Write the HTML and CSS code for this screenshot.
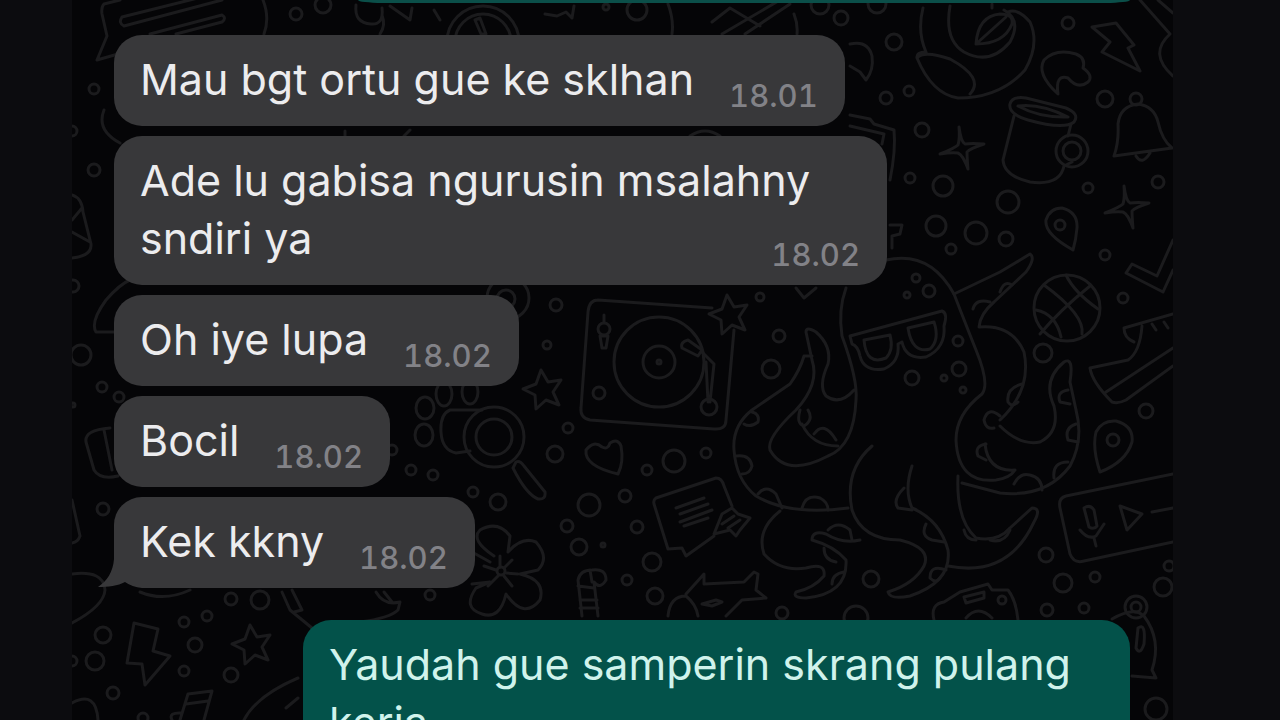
FILE: index.html
```html
<!DOCTYPE html>
<html lang="id">
<head>
    <meta charset="UTF-8">
    <meta name="viewport" content="width=device-width, initial-scale=1.0">
    <title>Chat</title>
    <link rel="stylesheet" href="styles.css">
</head>
<body>
    <main class="chat">
        <svg class="wallpaper" viewBox="72 0 1101 720" preserveAspectRatio="xMinYMin slice" aria-hidden="true">
            <defs>
                <path id="star" d="M-2 -20 L5 -8 L18 -10 L10 2 L16 15 L3 10 L-7 19 L-8 5 L-20 -1 L-7 -6 Z"/>
                <path id="sparkle" d="M-3 -20 Q-1 -5 3 -3 Q10 -4 22 -3 Q7 2 5 5 Q5 10 6 22 Q1 8 -4 6 Q-10 5 -22 7 Q-7 1 -4 -2 Q-2 -8 -3 -20 Z"/>
            </defs>

            <!-- dots -->
            <g>
                <circle cx="296" cy="14" r="6"/><circle cx="323" cy="5" r="8"/><circle cx="94" cy="89" r="5"/>
                <circle cx="72" cy="131" r="5"/><circle cx="94" cy="170" r="6"/><circle cx="73" cy="286" r="6"/>
                <circle cx="81" cy="355" r="10"/><circle cx="102" cy="387" r="5"/><circle cx="119" cy="397" r="5"/>
                <circle cx="73" cy="405" r="2"/><circle cx="103" cy="509" r="6"/><circle cx="103" cy="635" r="8"/>
                <circle cx="95" cy="661" r="9"/><circle cx="72" cy="661" r="5"/><circle cx="113" cy="693" r="6"/>
                <circle cx="231" cy="599" r="6"/><circle cx="260" cy="600" r="9"/><circle cx="207" cy="616" r="5"/>
                <circle cx="184" cy="622" r="5"/><circle cx="195" cy="645" r="7"/><circle cx="184" cy="671" r="5"/>
                <circle cx="231" cy="675" r="7"/><circle cx="143" cy="718" r="5"/><circle cx="430" cy="595" r="5"/>
                <circle cx="637" cy="10" r="10"/><circle cx="606" cy="7" r="3"/><circle cx="820" cy="5" r="9"/>
                <circle cx="841" cy="18" r="7"/><circle cx="877" cy="4" r="9"/><circle cx="894" cy="42" r="8"/>
                <circle cx="886" cy="98" r="6"/><circle cx="909" cy="91" r="5"/><circle cx="922" cy="130" r="7"/>
                <circle cx="910" cy="178" r="5"/><circle cx="943" cy="186" r="10"/><circle cx="1008" cy="202" r="11"/>
                <circle cx="936" cy="226" r="10"/><circle cx="976" cy="233" r="11"/><circle cx="1006" cy="239" r="7"/>
                <circle cx="951" cy="249" r="5"/><circle cx="1068" cy="23" r="6"/><circle cx="1105" cy="99" r="8"/>
                <circle cx="1088" cy="188" r="5"/><circle cx="1158" cy="182" r="6"/><circle cx="1105" cy="255" r="5"/>
                <circle cx="1123" cy="298" r="5"/><circle cx="1043" cy="353" r="9"/><circle cx="1146" cy="411" r="7"/>
                <circle cx="916" cy="278" r="4"/><circle cx="929" cy="291" r="6"/><circle cx="907" cy="295" r="3"/>
                <circle cx="958" cy="341" r="5"/><circle cx="959" cy="369" r="7"/><circle cx="912" cy="378" r="7"/>
                <circle cx="944" cy="378" r="3"/><circle cx="963" cy="390" r="3"/><circle cx="556" cy="305" r="6"/>
                <circle cx="547" cy="345" r="4"/><circle cx="599" cy="393" r="6"/><circle cx="568" cy="428" r="5"/>
                <circle cx="555" cy="454" r="8"/><circle cx="674" cy="461" r="11"/><circle cx="647" cy="470" r="5"/>
                <circle cx="706" cy="453" r="5"/><circle cx="779" cy="336" r="6"/><circle cx="771" cy="369" r="9"/>
                <circle cx="760" cy="297" r="4"/><circle cx="411" cy="470" r="5"/><circle cx="433" cy="475" r="5"/>
                <circle cx="392" cy="450" r="5"/><circle cx="473" cy="492" r="5"/><circle cx="498" cy="502" r="8"/>
                <circle cx="589" cy="505" r="11"/><circle cx="625" cy="496" r="6"/><circle cx="567" cy="526" r="6"/>
                <circle cx="637" cy="527" r="6"/><circle cx="579" cy="547" r="8"/><circle cx="603" cy="545" r="2"/>
                <circle cx="652" cy="562" r="9"/><circle cx="627" cy="580" r="5"/><circle cx="655" cy="596" r="8"/>
                <circle cx="782" cy="613" r="6"/><circle cx="871" cy="579" r="8"/><circle cx="1046" cy="555" r="7"/>
                <circle cx="1063" cy="583" r="9"/><circle cx="1095" cy="577" r="5"/><circle cx="1047" cy="610" r="6"/>
                <circle cx="1084" cy="608" r="5"/><circle cx="1163" cy="587" r="9"/><circle cx="1169" cy="566" r="5"/>
                <circle cx="1156" cy="709" r="11"/><circle cx="856" cy="618" r="12"/>
            </g>

            <!-- speech bubble, clock and scraps along the top -->
            <path d="M104 4 Q101 7 102 14 L107 36 L97 60 L118 54 M104 4 L120 0 M263 0 Q270 18 264 34 M122 17 L222 -8 M124 26 L222 0 M122 17 Q118 23 124 26 M150 34 L222 15 Q227 18 222 22 L176 34"/>
            <path d="M356 5 Q354 23 371 24 Q384 25 382 8 M382 15 Q386 25 380 34 M390 6 L410 20 L412 8 M434 10 L440 20"/>
            <circle cx="483" cy="42" r="36"/><circle cx="483" cy="42" r="28"/>
            <path d="M475 20 L481 34 L486 34 L480 18 Z M545 14 L557 16 L566 12 L572 18 L574 6 M668 4 Q674 20 672 34 M712 22 L730 8 L760 26 M722 34 L780 0 M745 34 L790 4 M794 14 Q798 24 797 34"/>
            <path d="M850 44 Q868 40 872 56 Q874 70 866 80 L860 72 L850 66 M850 115 L870 119 L874 124 L894 130 Q896 150 890 180 M850 126 L884 134 L882 144"/>
            <path d="M104 110 Q96 130 120 143 M345 131 V136 M410 130 L404 136 M690 136 Q705 126 720 136"/>

            <!-- rose -->
            <path d="M923 8 Q917 32 926 52 Q916 52 917 58 Q932 94 958 98 Q1000 98 1025 70 Q1040 44 1030 22 Q1018 8 1008 12 M950 6 Q944 40 964 52 Q990 66 1010 42 Q1022 20 1004 10 M917 58 Q924 50 950 59 Q985 78 970 94"/>
            <path d="M976 44 Q978 16 1000 14 Q1014 14 1012 24 Q1004 44 976 44 Z M976 44 L1006 17 M992 4 V8"/>
            <!-- croissant, bolt, hat -->
            <path d="M1058 94 Q1036 74 1044 60 Q1056 48 1076 54 Q1086 58 1083 68 Q1094 76 1088 82 Q1078 90 1068 78 Q1055 74 1058 94 Z"/>
            <path d="M1092 27 L1116 23 L1134 45 L1128 48 L1140 71 L1102 52 L1110 42 Z M1140 0 L1170 34 M1158 0 L1173 13 M1170 34 Q1148 54 1173 76"/>
            <!-- mug -->
            <path d="M1010 104 Q1012 96 1026 98 L1066 108 Q1080 114 1074 122 Q1064 130 1028 120 Q1008 114 1010 104 Z M1018 106 Q1040 103 1068 117 Q1040 118 1018 106 Z M1014 116 L1003 160 Q1004 176 1030 182 Q1060 186 1064 166 L1072 162 M1071 124 L1068 136"/>
            <circle cx="1072" cy="151" r="16"/><circle cx="1072" cy="151" r="9"/>
            <!-- bell -->
            <path d="M1114 156 L1172 148 Q1162 140 1158 122 Q1154 106 1138 104 Q1120 106 1118 124 Q1119 142 1114 156 Z M1136 156 Q1142 166 1150 153"/>
            <circle cx="1136" cy="99" r="6"/>
            <use href="#sparkle" x="962" y="147"/>
            <use href="#sparkle" x="1127" y="206"/>
            <!-- pins and tick -->
            <path d="M1073 250 Q1044 234 1046 220 Q1050 208 1062 208 Q1078 212 1077 228 Q1076 240 1073 250 Z M1100 472 Q1092 448 1096 432 Q1102 420 1116 421 Q1134 426 1132 442 Q1126 462 1100 472 Z"/>
            <circle cx="1060" cy="225" r="5"/><circle cx="1113" cy="440" r="6"/>
            <path d="M1173 240 L1157 276 L1132 264 L1126 273 L1163 292 L1173 270 M890 225 H902 L900 234 L892 236 V248"/>
            <!-- ball -->
            <circle cx="1067" cy="308" r="33"/>
            <path d="M1044 285 Q1085 315 1082 334 M1066 275 Q1074 292 1098 309 M1090 286 Q1060 310 1040 334 M1036 310 Q1056 314 1061 337"/>
            <!-- shoe -->
            <path d="M1173 314 L1124 328 Q1124 338 1134 342 M1142 326 Q1140 352 1128 360 L1090 368 Q1092 382 1112 402 Q1118 404 1126 400 L1173 366 M1106 392 L1173 348 M1152 324 L1156 330 M1164 322 L1168 328"/>

            <!-- octopus -->
            <path d="M886 260 Q930 250 954 294 Q968 330 976 350 Q990 384 982 394 Q956 414 956 440 Q958 484 996 480 Q1010 478 1015 470 Q988 472 985 444"/>
            <path d="M954 294 L1000 272 L1030 254 Q1036 258 1026 272 L994 302 Q980 314 979 327 Q1012 324 1024 352 Q1032 390 1000 420"/>
            <path d="M1000 426 Q1020 446 1040 442 Q1060 432 1054 406 Q1042 380 1064 362 Q1074 356 1070 382 L1076 410 Q1084 440 1070 466 Q1046 498 1000 493 L962 483"/>
            <path d="M973 309 Q976 298 990 302 M1000 292 Q1004 280 1012 285 M1022 384 Q1006 388 1008 402 Q1012 408 1018 402 M1000 416 Q988 406 984 420 Q986 430 994 428 M986 444 Q974 446 978 456 L986 460 M1068 390 Q1056 392 1060 402 L1070 404 M1076 424 Q1064 428 1068 440 L1078 442 M1068 462 Q1052 462 1054 478 M1014 484 Q1020 472 1030 475 Q1042 478 1042 490"/>
            <path d="M958 476 Q956 520 976 538 Q998 542 1010 528 L1032 508 Q1042 508 1034 522 Q1008 578 948 566"/>
            <path d="M964 530 Q966 540 976 540 M990 540 Q1004 544 1010 530"/>
            <path d="M872 446 Q844 470 852 510 Q862 540 900 540 Q932 548 924 566 Q914 584 888 592 Q890 600 910 596 Q952 582 948 550 Q940 520 912 508 Q904 490 912 466"/>
            <path d="M904 488 Q892 500 898 508 L912 510 M926 524 Q920 536 932 540 L944 542 M946 570 Q930 564 930 578 Q936 584 940 578"/>
            <path d="M846 288 Q838 310 842 336 Q858 380 856 400 Q854 446 828 456 Q786 478 770 450 Q766 438 796 410 Q820 384 812 360 L806 332 Q806 326 816 332 Q832 346 828 364 Q818 386 826 396 Q840 406 854 390"/>
            <path d="M812 356 H804 Q800 370 790 384 L752 410 Q732 426 734 450 Q736 480 756 496 Q790 516 848 508"/>
            <path d="M800 410 Q796 424 804 426 Q814 420 808 410 M802 424 Q812 446 838 446 M814 434 Q824 420 836 440 M752 412 Q760 414 758 422 Q750 428 744 424 M736 456 Q750 454 752 466 Q750 474 742 474 M758 494 Q766 484 776 494 L782 508 M802 508 Q806 494 820 498 Q828 502 828 510"/>
            <path d="M780 511 Q756 530 764 554 Q780 572 806 568 Q826 562 824 576 Q814 588 796 592 Q792 598 806 598 Q848 594 846 560 Q834 546 812 540 Q812 530 826 534 Q842 544 860 540"/>
            <path d="M828 530 Q838 520 850 530 L852 540 M824 548 Q824 560 836 562 M844 572 Q832 574 832 584"/>
            <!-- glasses -->
            <path d="M850 336 L942 311 Q948 313 944 326 Q946 348 926 357 Q906 360 902 342 L898 344 Q900 362 884 369 Q864 372 860 356 Q858 346 852 344 Z M864 340 L890 335 Q894 350 886 358 Q866 366 864 340 Z M908 328 L934 322 Q940 340 930 349 Q912 354 908 328 Z"/>
            <path d="M796 288 L804 298 L816 288"/>

            <!-- record player -->
            <path d="M598 300 L712 308 M734 330 L726 420 Q726 430 714 429 L590 420 Q580 418 581 408 L588 312 Q589 300 598 300"/>
            <circle cx="659" cy="362" r="45"/><circle cx="659" cy="362" r="16"/><circle cx="659" cy="362" r="2"/>
            <path d="M688 340 L702 350 L698 356 L682 348 Q680 342 688 340 Z M702 352 L714 364 L710 402 M706 362 L708 402"/>
            <circle cx="709" cy="407" r="8"/><circle cx="604" cy="329" r="6"/>
            <path d="M604 315 V322 M600 336 H608 L606 348 H602 Z"/>
            <use href="#star" x="729" y="315"/>
            <use href="#star" x="543" y="390"/>
            <use href="#star" x="252" y="645"/>
            <path d="M618 474 Q584 466 586 450 Q594 440 602 447 Q608 450 610 443 Q618 438 621 446 Q624 462 618 474 Z"/>

            <!-- magnifier, paw -->
            <circle cx="494" cy="437" r="30"/><circle cx="494" cy="437" r="18"/>
            <path d="M516 462 Q520 460 524 466 L545 492 Q546 500 538 499 Q526 494 513 468 Z M482 410 H450 Q440 414 441 432 Q442 450 456 453 L470 451"/>
            <ellipse cx="425" cy="408" rx="9" ry="11"/><ellipse cx="424" cy="435" rx="9" ry="11"/>
            <ellipse cx="444" cy="394" rx="8" ry="12"/><ellipse cx="470" cy="392" rx="8" ry="12"/>
            <circle cx="506" cy="299" r="9"/><circle cx="508" cy="298" r="21"/>
            <!-- note -->
            <path d="M656 498 L716 478 Q722 478 724 486 L732 506 M714 536 L686 556 L682 548 L668 549 L654 504 Q653 500 656 498 M676 508 L704 498 M680 514 L708 504 M680 522 L712 510 M684 526 L708 518"/>
            <path d="M714 534 L722 514 L732 508 L738 514 L750 518 L740 530 L736 536 L730 530 Z M722 524 L734 516 M728 528 L740 520"/>
            <!-- flower -->
            <path d="M494 556 Q470 540 480 530 Q498 520 510 536 L508 552 Q522 536 536 542 Q550 558 538 570 L520 574 Q546 580 540 600 Q524 620 506 594 Q500 620 482 614 Q462 608 476 588 L490 582 L472 584 M472 552 L490 562"/>
            <path d="M500 556 V567 M512 560 L504 568 M484 566 L496 570 M518 574 L506 573 M488 586 L498 576 M512 586 L504 576"/>
            <circle cx="501" cy="571" r="4"/>
            <!-- candy cane, plane, camera -->
            <path d="M582 616 L578 580 Q580 570 592 570 Q606 568 606 580 Q600 590 594 582 L598 616 M578 586 L594 588 M580 600 H597 M580 608 H598 M590 570 L592 582"/>
            <path d="M686 594 L704 574 L704 584 L744 582 L754 572 L758 574 L756 590 L766 598 L742 600 L726 616 M668 616 Q670 596 686 596 Q696 604 698 616 M702 604 L716 600 L722 602 L712 606 Z"/>
            <path d="M934 620 Q930 604 944 602 L960 592 L988 584 L992 590 L1008 590 Q1016 600 1018 620 M964 597 L984 592 V598 L966 603 Z M966 618 Q978 604 992 618"/>
            <circle cx="1002" cy="600" r="4"/>
            <!-- voice card -->
            <path d="M1173 474 L1066 496 Q1058 498 1060 508 L1070 554 Q1074 564 1084 561 L1173 542 M1084 508 Q1090 504 1094 510 L1097 526 Q1094 530 1089 527 Z M1080 530 Q1088 540 1096 536 L1104 524 M1094 538 L1096 546 M1120 506 L1142 514 L1127 530 Z M1152 512 L1173 508"/>
            <!-- bag -->
            <path d="M1112 619 Q1134 606 1144 616 Q1162 640 1152 670 L1156 678 L1132 676 M1138 628 Q1146 622 1144 644 Q1140 656 1136 648 Z"/>
            <circle cx="1136" cy="607" r="11"/><circle cx="1136" cy="607" r="5"/>

            <!-- left edge -->
            <path d="M72 195 Q82 198 83 212 L91 244 Q92 256 72 258 M72 220 L82 208 M72 232 L90 242 M106 300 Q120 284 130 280 M106 300 Q90 322 96 332 L116 332 M110 428 Q84 430 86 442 L94 470 Q100 480 118 476 M104 430 L112 470"/>
            <path d="M72 500 L80 536 Q78 542 72 543 M72 574 Q104 570 105 590 Q104 606 72 623 M140 592 Q164 602 190 590"/>
            <path d="M134 623 L158 629 L153 651 L170 656 L145 685 L142 664 L127 663 Z"/>
            <path d="M72 703 Q96 690 98 720 M180 720 L188 694 L212 691 L204 720 M186 704 L208 701 M172 720 Q168 712 182 713 M244 720 Q256 696 298 678 M286 708 L298 698"/>
            <path d="M282 592 L290 610 L312 628 M292 590 L302 610 L294 612 M376 592 Q384 606 400 602 L398 610 Q390 618 360 622 M384 592 L392 602"/>
        </svg>

        <div class="messages">
            <div class="cut"></div>

            <div class="group">
                <div class="bubble incoming">Mau bgt ortu gue ke sklhan<time class="time">18.01</time></div>
                <div class="bubble incoming">Ade lu gabisa ngurusin msalahny sndiri ya<time class="time">18.02</time></div>
                <div class="bubble incoming">Oh iye lupa<time class="time">18.02</time></div>
                <div class="bubble incoming">Bocil<time class="time">18.02</time></div>
                <div class="bubble incoming last">Kek kkny<time class="time">18.02</time>
                    <svg class="tail" viewBox="0 0 44 34" aria-hidden="true">
                        <path d="M16 0 V5 C15 18 9 27 0 33 C10 33 20 32 27 28 Q34 33 44 34 V0 Z"/>
                    </svg>
                </div>
            </div>

            <div class="group">
                <div class="bubble outgoing">Yaudah gue samperin skrang pulang kerja</div>
            </div>
        </div>
    </main>
</body>
</html>
```
FILE: styles.css
```css
* {
    box-sizing: border-box;
}
body {
    margin: 0;
    height: 100vh;
    padding: 0 107px 0 72px;
    overflow: hidden;
    background: #0c0c0f;
    font-family: Inter, Roboto, "Liberation Sans", sans-serif;
}
.chat {
    position: relative;
    height: 100%;
    overflow: hidden;
    background: #050507;
}
.wallpaper {
    position: absolute;
    top: 0;
    left: 0;
    width: 100%;
    height: 100%;
    fill: none;
    stroke: #1b1b1d;
    stroke-width: 3;
    stroke-linejoin: round;
    stroke-linecap: round;
}
.messages {
    position: relative;
    display: flex;
    flex-direction: column;
    gap: 32px;
    padding: 0 43px 0 42px;
}
/* bottom edge of the message scrolled off above */
.cut {
    align-self: flex-end;
    width: 76%;
    height: 3px;
    border-radius: 0 0 24px 24px / 0 0 3px 3px;
    background: #0b4f49;
}
.group {
    display: flex;
    flex-direction: column;
    align-items: flex-start;
    gap: 10px;
}
.bubble {
    position: relative;
    padding: 15px 27px 18px 26px;
    border-radius: 28px;
    font-size: 43px;
    line-height: 58px;
}
.incoming {
    max-width: 773px;
    background: #38383a;
    color: #ececee;
}
.outgoing {
    align-self: flex-end;
    max-width: 827px;
    background: #03524a;
    color: #d0f3ec;
}
.time {
    float: right;
    margin: 34px 0 0 35px;
    font-size: 31px;
    font-weight: 500;
    font-variant-numeric: tabular-nums;
    line-height: 24px;
    color: #828287;
}
.last {
    border-bottom-left-radius: 0;
    background: linear-gradient(#38383a, #38383a) right / calc(100% - 28px) 100% no-repeat, linear-gradient(#38383a, #38383a) top left / 28px calc(100% - 34px) no-repeat;
}
.tail {
    position: absolute;
    left: -16px;
    bottom: 0;
    width: 44px;
    height: 34px;
    fill: #38383a;
}
```
